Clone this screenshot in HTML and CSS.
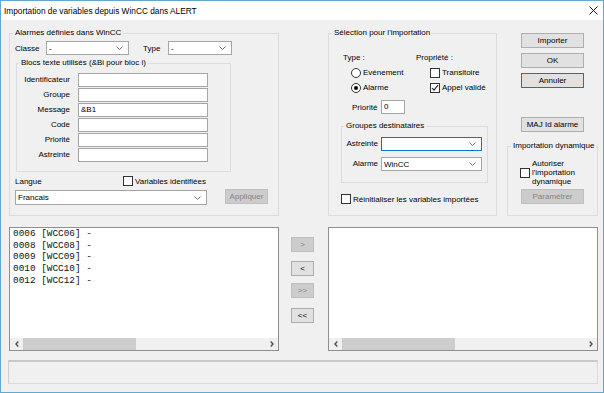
FILE: index.html
```html
<!DOCTYPE html>
<html lang="fr">
<head>
    <meta charset="UTF-8">
    <title>Importation de variables depuis WinCC dans ALERT</title>
    <link rel="stylesheet" href="styles.css">
</head>
<body>
    <div class="window">
        <div class="titlebar">
            <span class="title">Importation de variables depuis WinCC dans ALERT</span>
            <svg class="close" width="9" height="9" viewBox="0 0 9 9"><path d="M0.5 0.5 L8.5 8.5 M8.5 0.5 L0.5 8.5" stroke="#1a1a1a" stroke-width="1" fill="none"/></svg>
        </div>

        <div class="client">
            <div class="top">
                <!-- Alarmes definies dans WinCC -->
                <fieldset class="group alarms">
                    <legend>Alarmes définies dans WinCC</legend>
                    <div class="filter-row">
                        <span class="lbl-classe">Classe</span>
                        <div class="combo combo-classe"><span>-</span><svg class="chev" width="7" height="4" viewBox="0 0 7 4"><path d="M0.5 0.5 L3.5 3.5 L6.5 0.5" fill="none" stroke="#707070"/></svg></div>
                        <span class="lbl-type">Type</span>
                        <div class="combo combo-type"><span>-</span><svg class="chev" width="7" height="4" viewBox="0 0 7 4"><path d="M0.5 0.5 L3.5 3.5 L6.5 0.5" fill="none" stroke="#707070"/></svg></div>
                    </div>

                    <fieldset class="group blocks">
                        <legend>Blocs texte utilisés (&amp;Bi pour bloc i)</legend>
                        <div class="field-grid">
                            <span class="field-label">Identificateur</span><div class="edit"></div>
                            <span class="field-label">Groupe</span><div class="edit"></div>
                            <span class="field-label">Message</span><div class="edit">&amp;B1</div>
                            <span class="field-label">Code</span><div class="edit"></div>
                            <span class="field-label">Priorité</span><div class="edit"></div>
                            <span class="field-label">Astreinte</span><div class="edit"></div>
                        </div>
                    </fieldset>

                    <div class="lang-row">
                        <span class="lbl-langue">Langue</span>
                        <span class="check"></span>
                        <span class="opt-text">Variables identifiées</span>
                    </div>
                    <div class="lang-select-row">
                        <div class="combo combo-lang"><span>Francais</span><svg class="chev" width="7" height="4" viewBox="0 0 7 4"><path d="M0.5 0.5 L3.5 3.5 L6.5 0.5" fill="none" stroke="#707070"/></svg></div>
                        <div class="btn disabled btn-apply">Appliquer</div>
                    </div>
                </fieldset>

                <!-- Selection pour l'importation -->
                <fieldset class="group selection">
                    <legend>Sélection pour l'importation</legend>
                    <div class="type-grid">
                        <span>Type :</span>
                        <span>Propriété :</span>
                        <div class="opt opt-type"><span class="radio"></span><span class="opt-text">Evénement</span></div>
                        <div class="opt opt-prop"><span class="check"></span><span class="opt-text">Transitoire</span></div>
                        <div class="opt opt-type"><span class="radio on"></span><span class="opt-text">Alarme</span></div>
                        <div class="opt opt-prop"><span class="check"><svg width="8" height="8" viewBox="0 0 8 8"><path d="M1 4 L3 6.2 L7 1.2" fill="none" stroke="#222" stroke-width="1.1"/></svg></span><span class="opt-text">Appel validé</span></div>
                    </div>
                    <div class="prio-row">
                        <span class="lbl-prio">Priorité</span>
                        <div class="edit edit-prio">0</div>
                    </div>

                    <fieldset class="group dest">
                        <legend>Groupes destinataires</legend>
                        <div class="dest-grid">
                            <span class="field-label">Astreinte</span>
                            <div class="combo focused"><span></span><svg class="chev" width="7" height="4" viewBox="0 0 7 4"><path d="M0.5 0.5 L3.5 3.5 L6.5 0.5" fill="none" stroke="#707070"/></svg></div>
                            <span class="field-label">Alarme</span>
                            <div class="combo"><span>WinCC</span><svg class="chev" width="7" height="4" viewBox="0 0 7 4"><path d="M0.5 0.5 L3.5 3.5 L6.5 0.5" fill="none" stroke="#707070"/></svg></div>
                        </div>
                    </fieldset>

                    <div class="opt reset-row"><span class="check"></span><span class="opt-text">Réinitialiser les variables importées</span></div>
                </fieldset>

                <!-- Boutons de droite -->
                <div class="side">
                    <div class="btn side-btn">Importer</div>
                    <div class="btn side-btn">OK</div>
                    <div class="btn side-btn default">Annuler</div>
                    <div class="btn side-btn btn-maj">MAJ Id alarme</div>

                    <fieldset class="group dynamic">
                        <legend>Importation dynamique</legend>
                        <div class="auth-row">
                            <span class="check"></span>
                            <span class="auth-text">Autoriser<br>l'importation<br>dynamique</span>
                        </div>
                        <div class="btn disabled btn-param">Paramétrer</div>
                    </fieldset>
                </div>
            </div>

            <div class="lists">
                <div class="listbox">
                    <div class="list-items">0006 [WCC06] -
0008 [WCC08] -
0009 [WCC09] -
0010 [WCC10] -
0012 [WCC12] -</div>
                    <div class="hscroll">
                        <span class="arrow"><svg width="4" height="6" viewBox="0 0 4 6"><path d="M3.3 0.5 L1 3 L3.3 5.5" fill="none" stroke="#505050" stroke-width="1.4"/></svg></span>
                        <span class="thumb"></span>
                        <span class="track"></span>
                        <span class="arrow"><svg width="4" height="6" viewBox="0 0 4 6"><path d="M0.7 0.5 L3 3 L0.7 5.5" fill="none" stroke="#505050" stroke-width="1.4"/></svg></span>
                    </div>
                </div>

                <div class="movers">
                    <div class="btn disabled mover">&gt;</div>
                    <div class="btn mover">&lt;</div>
                    <div class="btn disabled mover">&gt;&gt;</div>
                    <div class="btn mover">&lt;&lt;</div>
                </div>

                <div class="listbox right-list">
                    <div class="list-items"></div>
                    <div class="hscroll">
                        <span class="arrow"><svg width="4" height="6" viewBox="0 0 4 6"><path d="M3.3 0.5 L1 3 L3.3 5.5" fill="none" stroke="#505050" stroke-width="1.4"/></svg></span>
                        <span class="thumb"></span>
                        <span class="track"></span>
                        <span class="arrow"><svg width="4" height="6" viewBox="0 0 4 6"><path d="M0.7 0.5 L3 3 L0.7 5.5" fill="none" stroke="#505050" stroke-width="1.4"/></svg></span>
                    </div>
                </div>
            </div>

            <div class="status"></div>
        </div>
    </div>
</body>
</html>
```

FILE: styles.css
```css
* {
    box-sizing: border-box;
}
body {
    margin: 0;
    background: #fff;
    font-family: "Liberation Sans", Arial, sans-serif;
    font-size: 8px;
    color: #000;
}
.window {
    width: 604px;
    height: 393px;
    border: 1px solid #62a8d1;
    background: #f0f0f0;
    display: flex;
    flex-direction: column;
}
.titlebar {
    height: 19px;
    flex: none;
    background: #fff;
    display: flex;
    align-items: center;
    justify-content: space-between;
    padding: 0 5px 0 3px;
}
.title {
    font-size: 8.3px;
}
.client {
    flex: 1;
    padding: 8px 5px 8px 8px;
    display: flex;
    flex-direction: column;
}

/* group boxes */
.group {
    margin: 0;
    padding: 0 0 0 5px;
    border: 1px solid #dcdcdc;
    min-width: 0;
}
.group legend {
    padding: 0 2px;
    margin-left: -2px;
    line-height: 10px;
}
.top {
    display: flex;
    height: 188px;
    flex: none;
}
.alarms {
    width: 270px;
}
.selection {
    width: 169px;
    margin-left: 49px;
}
.side {
    width: 91px;
    margin-left: 10px;
    display: flex;
    flex-direction: column;
}

/* controls */
.edit {
    height: 14px;
    background: #fff;
    border: 1px solid #a5a5a5;
    padding-left: 2px;
    line-height: 12px;
}
.combo {
    height: 14px;
    background: #fff;
    border: 1px solid #a5a5a5;
    display: flex;
    align-items: center;
    justify-content: space-between;
    padding: 0 5px 0 2px;
}
.combo.focused {
    border-color: #0078d7;
}
.btn {
    height: 15px;
    background: #e1e1e1;
    border: 1px solid #adadad;
    display: flex;
    align-items: center;
    justify-content: center;
}
.btn.default {
    border-color: #0078d7;
}
.btn.disabled {
    background: #cccccc;
    border-color: #bfbfbf;
    color: #858585;
}
.check {
    width: 10px;
    height: 10px;
    border: 1px solid #333;
    background: #fff;
    flex: none;
    display: flex;
    align-items: center;
    justify-content: center;
}
.radio {
    width: 10px;
    height: 10px;
    border: 1px solid #333;
    border-radius: 50%;
    background: #fff;
    flex: none;
    display: flex;
    align-items: center;
    justify-content: center;
}
.radio.on::after {
    content: "";
    width: 4px;
    height: 4px;
    border-radius: 50%;
    background: #000;
}
.opt {
    display: flex;
    align-items: center;
}
.opt-text {
    margin-left: 2px;
}

/* alarmes definies */
.filter-row {
    display: flex;
    align-items: center;
    height: 14px;
    margin-top: 3px;
}
.lbl-classe {
    width: 31px;
}
.combo-classe {
    width: 83px;
}
.lbl-type {
    width: 25px;
    margin-left: 14px;
}
.combo-type {
    width: 64px;
}
.blocks {
    width: 215px;
    height: 114px;
    margin: 3px 0 0 1px;
    padding: 5px 0 0 4px;
}
.field-grid {
    display: grid;
    grid-template-columns: 49px 130px;
    grid-auto-rows: 14px;
    column-gap: 8px;
    row-gap: 1px;
}
.field-label {
    text-align: right;
    line-height: 14px;
    white-space: nowrap;
}
.lang-row {
    display: flex;
    align-items: center;
    height: 10px;
    margin-top: 4px;
}
.lbl-langue {
    width: 108px;
}
.lang-select-row {
    display: flex;
    margin-top: 4px;
}
.combo-lang {
    width: 192px;
    height: 15px;
}
.btn-apply {
    width: 43px;
    margin: -1px 0 0 18px;
}

/* selection pour l'importation */
.type-grid {
    display: grid;
    grid-template-columns: 73px auto;
    grid-template-rows: 10px 10px 10px;
    row-gap: 5px;
    margin: 15px 0 0 9px;
    line-height: 10px;
}
.opt-type {
    padding-left: 8px;
}
.opt-prop {
    padding-left: 14px;
}
.prio-row {
    display: flex;
    align-items: center;
    height: 14px;
    margin-top: 7px;
}
.lbl-prio {
    width: 29px;
    margin-left: 18px;
}
.edit-prio {
    width: 24px;
}
.dest {
    width: 147px;
    height: 62px;
    margin: 7px 0 0 7px;
    padding: 6px 0 0 4px;
}
.dest-grid {
    display: grid;
    grid-template-columns: 32px 101px;
    grid-auto-rows: 14px;
    column-gap: 3px;
    row-gap: 6px;
}
.reset-row {
    height: 10px;
    margin: 11px 0 0 7px;
}

/* colonne de droite */
.side-btn {
    width: 63px;
    margin: 5px 0 0 14px;
}
.btn-maj {
    margin-top: 29px;
}
.dynamic {
    height: 75px;
    margin-top: 9px;
}
.auth-row {
    display: flex;
    align-items: center;
    margin: 8px 0 0 7px;
}
.auth-text {
    margin-left: 2px;
    line-height: 9px;
}
.btn-param {
    width: 63px;
    margin: 3px 0 0 8px;
}

/* listes */
.lists {
    display: flex;
    height: 124px;
    margin-top: 11px;
    flex: none;
}
.listbox {
    width: 270px;
    border: 1px solid #8f8f8f;
    background: #fff;
    display: flex;
    flex-direction: column;
}
.right-list {
    margin-left: 14px;
}
.list-items {
    flex: 1;
    padding-left: 3px;
    font-family: "Liberation Mono", "Courier New", monospace;
    font-size: 9.4px;
    line-height: 11.67px;
    white-space: pre;
    color: #111;
}
.hscroll {
    height: 12px;
    display: flex;
    background: #f0f0f0;
}
.hscroll .arrow {
    width: 13px;
    display: flex;
    align-items: center;
    justify-content: center;
}
.hscroll .thumb {
    width: 113px;
    background: #cdcdcd;
}
.hscroll .track {
    flex: 1;
}
.movers {
    width: 23px;
    margin-left: 12px;
    display: flex;
    flex-direction: column;
}
.mover {
    margin-top: 9px;
}
.mover:first-child {
    margin-top: 10px;
}
.mover:nth-child(3) {
    margin-top: 7px;
}
.mover:nth-child(4) {
    margin-top: 10px;
}
.status {
    height: 24px;
    width: 590px;
    margin: 9px 0 0 -1px;
    border: 1px solid #dadada;
    border-top: 2px solid #c9c9c9;
    border-left-color: #cfcfcf;
}
```
